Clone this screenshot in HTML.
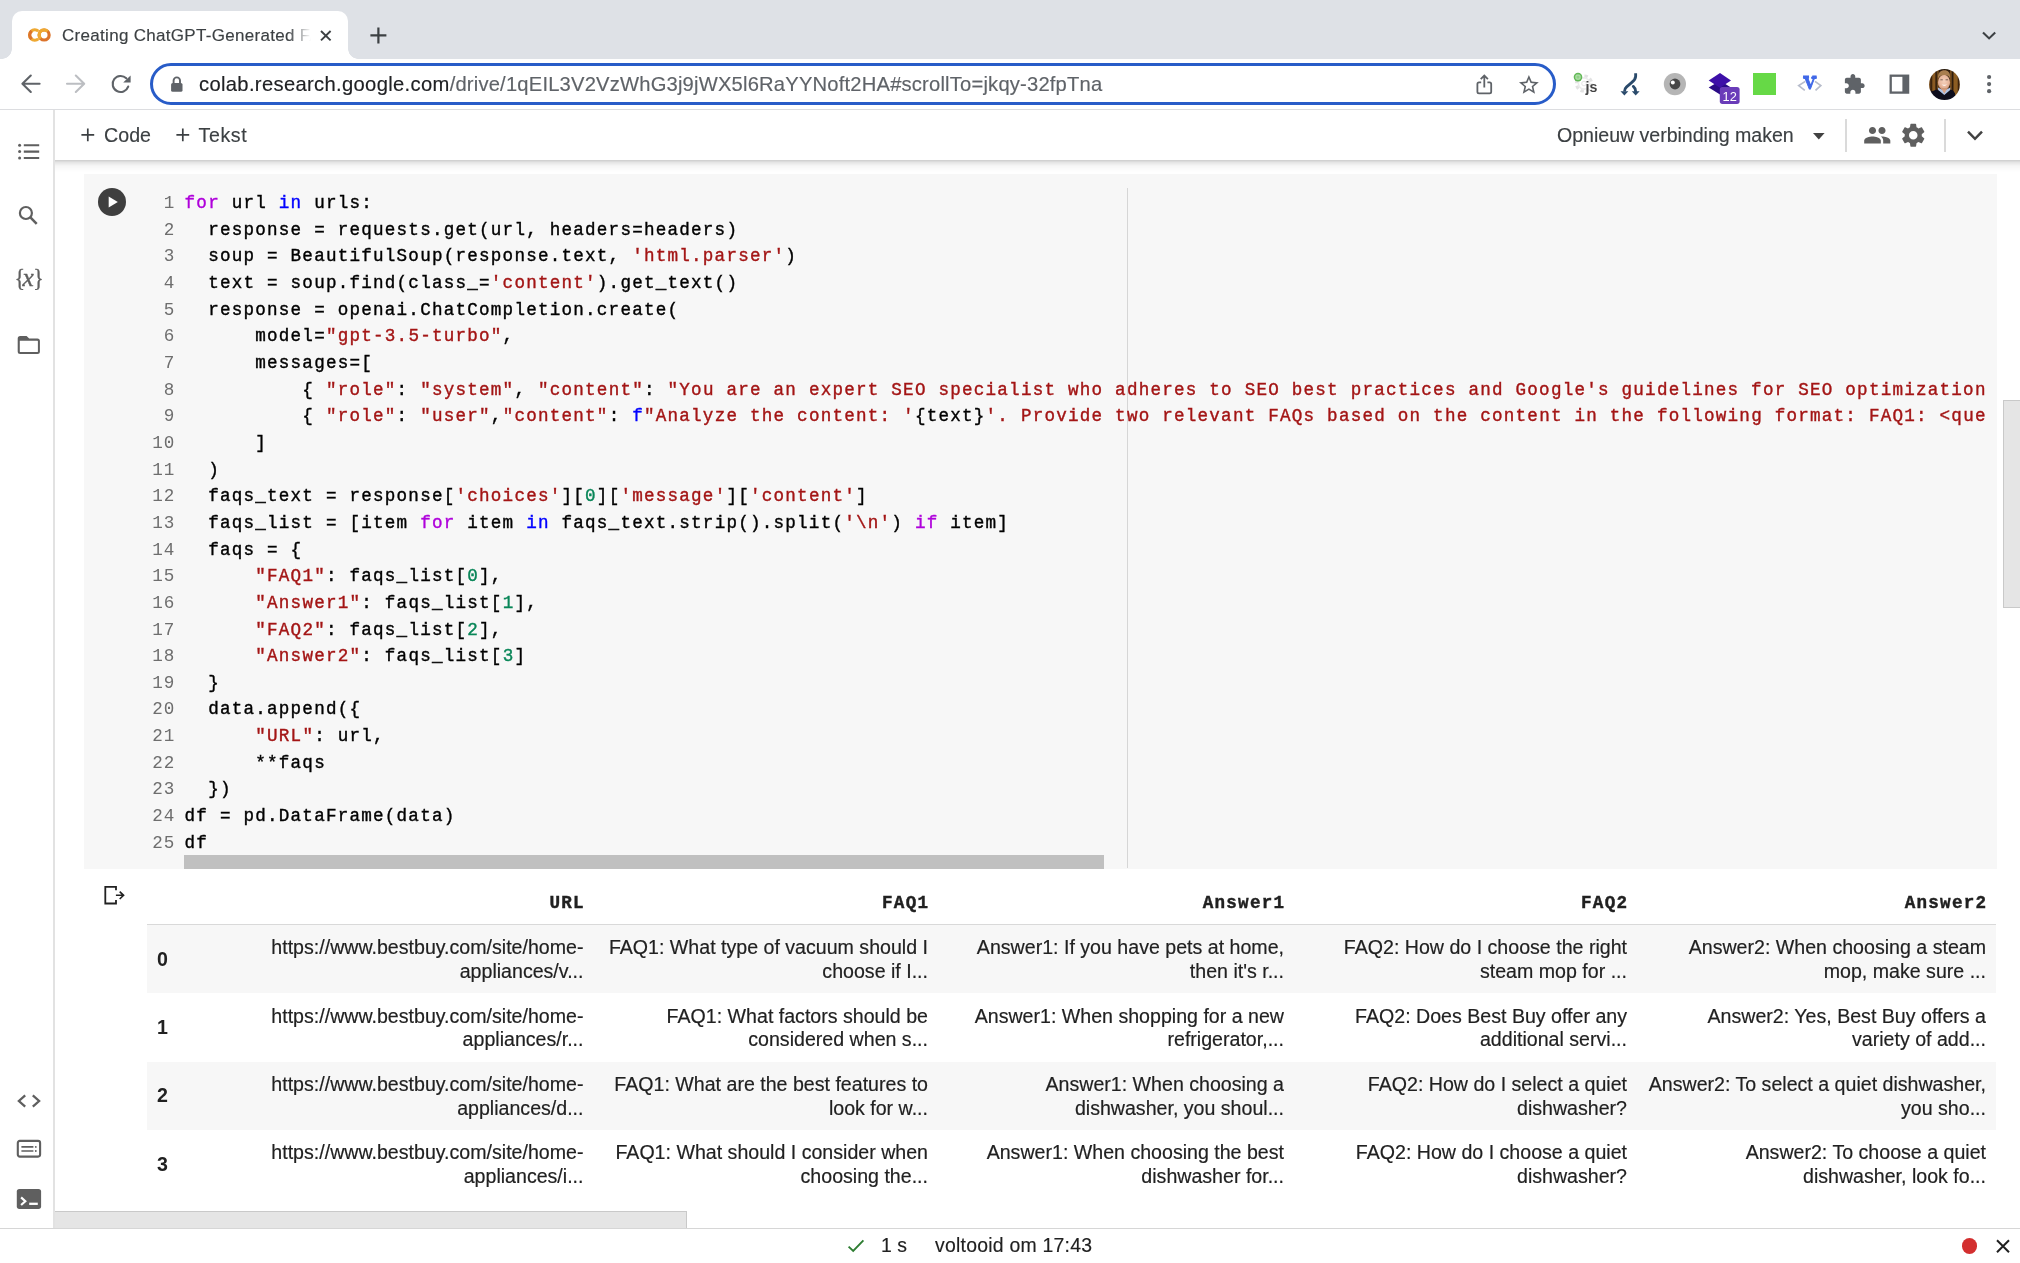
<!DOCTYPE html>
<html lang="nl">
<head>
<meta charset="utf-8">
<title>Creating ChatGPT-Generated FAQs</title>
<style>
*{box-sizing:border-box;margin:0;padding:0}
html,body{width:2020px;height:1263px;overflow:hidden;background:#fff}
body{position:relative;font-family:"Liberation Sans",sans-serif;color:#202124;-webkit-font-smoothing:antialiased;opacity:.999;will-change:transform}
.abs{position:absolute}
svg{position:absolute;overflow:visible}
/* ---------- browser chrome ---------- */
#tabstrip{left:0;top:0;width:2020px;height:58.7px;background:#dee1e6}
#tab{left:11.5px;top:11px;width:336.3px;height:47.7px;background:#fff;border-radius:10px 10px 0 0}
#tab:before,#tab:after{content:"";position:absolute;bottom:0;width:10px;height:10px;background:radial-gradient(circle at 0 0,#dee1e6 9.5px,#fff 10px)}
#tab:before{left:-10px}
#tab:after{right:-10px;background:radial-gradient(circle at 100% 0,#dee1e6 9.5px,#fff 10px)}
#tabtitle{-webkit-text-stroke:.15px;left:62px;top:24px;width:252px;height:24px;font-size:17px;line-height:24px;color:#3c4043;white-space:nowrap;overflow:hidden;letter-spacing:.3px;
 -webkit-mask-image:linear-gradient(90deg,#000 226px,transparent 249px);mask-image:linear-gradient(90deg,#000 226px,transparent 249px)}
#toolbar{left:0;top:58.7px;width:2020px;height:51.3px;background:#fff;border-bottom:1.5px solid #dcdde0}
#omni{left:150px;top:63px;width:1406px;height:42px;border:3px solid #285cc8;border-radius:21px;background:#fff}
#url{-webkit-text-stroke:.15px;left:199px;top:71px;font-size:20.2px;line-height:26px;white-space:nowrap;color:#5f6368;letter-spacing:.185px}
#url b{letter-spacing:.33px}
#url b{font-weight:400;color:#202124}
/* ---------- colab ---------- */
#side{left:0;top:110px;width:55px;height:1119px;background:#fff;border-right:2px solid #e2e2e2}
#ctool{left:55px;top:110px;width:1965px;height:50px;background:#fff;z-index:3}
#cshadow{left:55px;top:160px;width:1965px;height:13px;z-index:3;background:linear-gradient(180deg,rgba(0,0,0,.2) 0,rgba(0,0,0,.1) 2.5px,rgba(0,0,0,.035) 6px,rgba(0,0,0,0) 12px)}
.tb{-webkit-text-stroke:.15px;font-size:19.6px;line-height:24px;color:#3c4043;white-space:nowrap;z-index:4}
.vdiv{width:1.5px;background:#dadada;z-index:4}
/* ---------- code cell ---------- */
#cell{left:84px;top:174px;width:1913px;height:694.5px;background:#f7f7f7}
#ruler{left:1126.5px;top:188px;width:1.5px;height:680px;background:#d6d6d6}
#cellsb{left:184px;top:855px;width:920px;height:13.5px;background:#c0c0c0}
#code{left:184.6px;top:190px;width:1803px;overflow:hidden;font-family:"Liberation Mono",monospace;font-size:17.6px;letter-spacing:1.22px;line-height:26.66px;color:#000;-webkit-text-stroke:.38px}
#code div{height:26.66px;white-space:pre}
#code i{font-style:normal}
#code .k{color:#af00db}
#code .b{color:#0000ff}
#code .s{color:#a31515}
#code .n{color:#098658}
#lnums{left:120px;top:190px;width:55.2px;text-align:right;font-family:"Liberation Mono",monospace;font-size:17.6px;letter-spacing:.9px;line-height:26.66px;color:#6e6e6e;white-space:pre}
/* ---------- output ---------- */
#thline{left:147px;top:924px;width:1849px;height:1.5px;background:#d9d9d9}
.trbg{left:147px;width:1849px;background:#f7f7f7}
.th{-webkit-text-stroke:.4px;top:889.5px;font-family:"Liberation Mono",monospace;font-weight:700;font-size:17.6px;letter-spacing:1.22px;line-height:26px;color:#212121;white-space:nowrap;margin-right:-1.22px}
.td{-webkit-text-stroke:.18px;font-size:19.6px;line-height:23.85px;color:#212121;text-align:right;white-space:nowrap}
.ti{left:157px;font-size:19.6px;line-height:24px;font-weight:700;color:#212121}
/* ---------- scrollbars / status ---------- */
#vsb{left:2003px;top:400px;width:18px;height:208px;background:#e5e5e5;border:1.5px solid #c9c9c9;border-right:0}
#hsb{left:55px;top:1211px;width:632px;height:17.5px;background:#e5e5e5;border:1.5px solid #c9c9c9;border-left:0}
#status{left:0;top:1228px;width:2020px;height:35px;background:#fff;border-top:1.5px solid #d6d6d6}
.st{-webkit-text-stroke:.15px;top:1233.3px;font-size:19.4px;line-height:24px;color:#212121;white-space:nowrap}
</style>
</head>
<body>
<!-- tab strip -->
<div id="tabstrip" class="abs"></div>
<div id="tab" class="abs"></div>
<div id="tabtitle" class="abs">Creating ChatGPT-Generated FAQs</div>
<!-- toolbar -->
<div id="toolbar" class="abs"></div>
<div id="omni" class="abs"></div>
<div id="url" class="abs"><b>colab.research.google.com</b>/drive/1qEIL3V2VzWhG3j9jWX5l6RaYYNoft2HA#scrollTo=jkqy-32fpTna</div>
<!-- colab -->
<div id="side" class="abs"></div>
<div id="ctool" class="abs"></div>
<div id="cshadow" class="abs"></div>
<div class="abs tb" style="left:104px;top:123.3px;letter-spacing:.05px">Code</div>
<div class="abs tb" style="left:198.5px;top:123.3px;letter-spacing:.6px">Tekst</div>
<div class="abs tb" style="left:1557px;top:123.3px;letter-spacing:-.03px">Opnieuw verbinding maken</div>
<div class="abs vdiv" style="left:1845px;top:119px;height:33px"></div>
<div class="abs vdiv" style="left:1944px;top:119px;height:33px"></div>
<!-- code cell -->
<div id="cell" class="abs"></div>
<div id="ruler" class="abs"></div>
<div id="cellsb" class="abs"></div>
<div id="lnums" class="abs">1<br>2<br>3<br>4<br>5<br>6<br>7<br>8<br>9<br>10<br>11<br>12<br>13<br>14<br>15<br>16<br>17<br>18<br>19<br>20<br>21<br>22<br>23<br>24<br>25</div>
<div id="code" class="abs">
<div><i class="k">for</i> url <i class="b">in</i> urls:</div>
<div>  response = requests.get(url, headers=headers)</div>
<div>  soup = BeautifulSoup(response.text, <i class="s">'html.parser'</i>)</div>
<div>  text = soup.find(class_=<i class="s">'content'</i>).get_text()</div>
<div>  response = openai.ChatCompletion.create(</div>
<div>      model=<i class="s">"gpt-3.5-turbo"</i>,</div>
<div>      messages=[</div>
<div>          { <i class="s">"role"</i>: <i class="s">"system"</i>, <i class="s">"content"</i>: <i class="s">"You are an expert SEO specialist who adheres to SEO best practices and Google's guidelines for SEO optimization</i></div>
<div>          { <i class="s">"role"</i>: <i class="s">"user"</i>,<i class="s">"content"</i>: <i class="b">f</i><i class="s">"Analyze the content: '</i>{text}<i class="s">'. Provide two relevant FAQs based on the content in the following format: FAQ1: &lt;que</i></div>
<div>      ]</div>
<div>  )</div>
<div>  faqs_text = response[<i class="s">'choices'</i>][<i class="n">0</i>][<i class="s">'message'</i>][<i class="s">'content'</i>]</div>
<div>  faqs_list = [item <i class="k">for</i> item <i class="b">in</i> faqs_text.strip().split(<i class="s">'\n'</i>) <i class="k">if</i> item]</div>
<div>  faqs = {</div>
<div>      <i class="s">"FAQ1"</i>: faqs_list[<i class="n">0</i>],</div>
<div>      <i class="s">"Answer1"</i>: faqs_list[<i class="n">1</i>],</div>
<div>      <i class="s">"FAQ2"</i>: faqs_list[<i class="n">2</i>],</div>
<div>      <i class="s">"Answer2"</i>: faqs_list[<i class="n">3</i>]</div>
<div>  }</div>
<div>  data.append({</div>
<div>      <i class="s">"URL"</i>: url,</div>
<div>      **faqs</div>
<div>  })</div>
<div>df = pd.DataFrame(data)</div>
<div>df</div>
</div>
<!--CELLEND-->
<!-- output table -->
<div id="thline" class="abs"></div>
<div class="abs trbg" style="top:925px;height:68.25px"></div>
<div class="abs trbg" style="top:1061.5px;height:68.25px"></div>
<div class="abs th" style="right:1436.5px">URL</div>
<div class="abs th" style="right:1092px">FAQ1</div>
<div class="abs th" style="right:736px">Answer1</div>
<div class="abs th" style="right:393px">FAQ2</div>
<div class="abs th" style="right:34px">Answer2</div>
<div class="abs ti" style="top:946.9px">0</div>
<div class="abs td" style="right:1436.5px;top:936.4px">https://www.bestbuy.com/site/home-<br>appliances/v...</div>
<div class="abs td" style="right:1092px;top:936.4px">FAQ1: What type of vacuum should I<br>choose if I...</div>
<div class="abs td" style="right:736px;top:936.4px">Answer1: If you have pets at home,<br>then it's r...</div>
<div class="abs td" style="right:393px;top:936.4px">FAQ2: How do I choose the right<br>steam mop for ...</div>
<div class="abs td" style="right:34px;top:936.4px">Answer2: When choosing a steam<br>mop, make sure ...</div>
<div class="abs ti" style="top:1015.1px">1</div>
<div class="abs td" style="right:1436.5px;top:1004.6px">https://www.bestbuy.com/site/home-<br>appliances/r...</div>
<div class="abs td" style="right:1092px;top:1004.6px">FAQ1: What factors should be<br>considered when s...</div>
<div class="abs td" style="right:736px;top:1004.6px">Answer1: When shopping for a new<br>refrigerator,...</div>
<div class="abs td" style="right:393px;top:1004.6px">FAQ2: Does Best Buy offer any<br>additional servi...</div>
<div class="abs td" style="right:34px;top:1004.6px">Answer2: Yes, Best Buy offers a<br>variety of add...</div>
<div class="abs ti" style="top:1083.4px">2</div>
<div class="abs td" style="right:1436.5px;top:1072.9px">https://www.bestbuy.com/site/home-<br>appliances/d...</div>
<div class="abs td" style="right:1092px;top:1072.9px">FAQ1: What are the best features to<br>look for w...</div>
<div class="abs td" style="right:736px;top:1072.9px">Answer1: When choosing a<br>dishwasher, you shoul...</div>
<div class="abs td" style="right:393px;top:1072.9px">FAQ2: How do I select a quiet<br>dishwasher?</div>
<div class="abs td" style="right:34px;top:1072.9px">Answer2: To select a quiet dishwasher,<br>you sho...</div>
<div class="abs ti" style="top:1151.7px">3</div>
<div class="abs td" style="right:1436.5px;top:1141.2px">https://www.bestbuy.com/site/home-<br>appliances/i...</div>
<div class="abs td" style="right:1092px;top:1141.2px">FAQ1: What should I consider when<br>choosing the...</div>
<div class="abs td" style="right:736px;top:1141.2px">Answer1: When choosing the best<br>dishwasher for...</div>
<div class="abs td" style="right:393px;top:1141.2px">FAQ2: How do I choose a quiet<br>dishwasher?</div>
<div class="abs td" style="right:34px;top:1141.2px">Answer2: To choose a quiet<br>dishwasher, look fo...</div>
<!--OUTPUTEND-->
<!-- scrollbars + status bar -->
<div id="vsb" class="abs"></div>
<div id="hsb" class="abs"></div>
<div id="status" class="abs"></div>
<svg style="left:847px;top:1239px" width="18" height="14" viewBox="0 0 18 14"><path d="M1.6 7.6 L6.2 12 L16.4 1.4" fill="none" stroke="#2e7d32" stroke-width="1.9"/></svg>
<div class="abs st" style="left:881px">1 s</div>
<div class="abs st" style="left:935px;letter-spacing:.25px">voltooid om 17:43</div>
<div class="abs" style="left:1961.8px;top:1238.4px;width:15.4px;height:15.4px;border-radius:50%;background:#d32f2f"></div>
<svg style="left:1996px;top:1239px" width="14" height="14" viewBox="0 0 14 14"><path d="M1 1.2 L13 13.2 M13 1.2 L1 13.2" fill="none" stroke="#212121" stroke-width="2"/></svg>
<!--STATUSEND-->
<!-- ===== tab strip icons ===== -->
<svg style="left:26px;top:27px" width="26" height="16" viewBox="0 0 26 16" fill="none" stroke-width="3.200">
 <path d="M12.330 4.140 A5.200 5.200 0 1 0 12.330 11.860" stroke="#eea832"/>
 <path d="M5.650 3.900 A5.200 5.200 0 0 0 5.650 12.100" stroke="#dc742c"/>
 <circle cx="18.150" cy="8" r="5" stroke="#dc742c"/>
 <path d="M21.560 4.340 A5 5 0 0 0 14.610 11.540" stroke="#eea832"/>
</svg>
<svg style="left:320px;top:30px" width="12" height="12" viewBox="0 0 12 12"><path d="M1 1 L10.6 10.4 M10.6 1 L1 10.4" fill="none" stroke="#3c4043" stroke-width="1.9"/></svg>
<svg style="left:370px;top:27px" width="17" height="17" viewBox="0 0 17 17"><path d="M8.4 0.4 V16.4 M0.4 8.4 H16.4" fill="none" stroke="#3c4043" stroke-width="2.2"/></svg>
<svg style="left:1981px;top:30px" width="16" height="11" viewBox="0 0 16 11"><path d="M2 2.4 L8.1 8.4 L14.2 2.4" fill="none" stroke="#3c4043" stroke-width="2.1"/></svg>
<!-- ===== toolbar nav icons ===== -->
<svg style="left:20px;top:73px" width="22" height="22" viewBox="0 0 22 22"><path d="M19.6 10.8 H2.6 M10.8 2.6 L2.4 10.8 L10.8 19" fill="none" stroke="#5f6368" stroke-width="2.1" stroke-linecap="round" stroke-linejoin="round"/></svg>
<svg style="left:65px;top:73px" width="22" height="22" viewBox="0 0 22 22"><path d="M2 10.8 H19 M10.8 2.6 L19.2 10.8 L10.8 19" fill="none" stroke="#bcbec2" stroke-width="2.1" stroke-linecap="round" stroke-linejoin="round"/></svg>
<svg style="left:110px;top:73px" width="22" height="22" viewBox="0 0 22 22">
 <path d="M16.3 5.3 A8 8 0 1 0 18.2 13.6" fill="none" stroke="#5f6368" stroke-width="2.1" stroke-linecap="round"/>
 <path d="M20.6 2.4 V9.6 H13.2 Z" fill="#5f6368"/>
</svg>
<!-- lock -->
<svg style="left:170px;top:76px" width="14" height="17" viewBox="0 0 14 17">
 <path d="M3.6 7.4 V4.6 A3.2 3.2 0 0 1 10 4.6 V7.4" fill="none" stroke="#5f6368" stroke-width="1.9"/>
 <rect x="1.1" y="6.9" width="11.4" height="8.9" rx="1.6" fill="#5f6368"/>
</svg>
<!-- share -->
<svg style="left:1475px;top:73px" width="19" height="23" viewBox="0 0 19 23">
 <path d="M6.2 9.3 H4 A1.6 1.6 0 0 0 2.4 10.9 V18.8 A1.6 1.6 0 0 0 4 20.4 H14.6 A1.6 1.6 0 0 0 16.200 18.800 V10.900 A1.600 1.600 0 0 0 14.600 9.300 H12.400" fill="none" stroke="#5f6368" stroke-width="1.8"/>
 <path d="M9.3 14.600 V2.800 M5.700 6.200 L9.300 2.600 L12.900 6.200" fill="none" stroke="#5f6368" stroke-width="1.8"/>
</svg>
<!-- star -->
<svg style="left:1517.400px;top:72.500px" width="23.800" height="23.800" viewBox="0 0 24 24"><path fill="#5f6368" d="M22 9.240l-7.190-.62L12 2 9.190 8.630 2 9.240l5.460 4.730L5.820 21 12 17.270 18.180 21l-1.630-7.030L22 9.240zM12 15.400l-3.760 2.270 1-4.280-3.320-2.880 4.380-.38L12 6.100l1.710 4.040 4.380.38-3.320 2.880 1 4.280L12 15.400z"/></svg>
<!-- ===== extensions ===== -->
<!-- js -->
<svg style="left:1572px;top:71px" width="28" height="28" viewBox="0 0 28 28">
 <circle cx="12" cy="12.500" r="7.600" fill="none" stroke="#e3e3e3" stroke-width="3" stroke-dasharray="3.400 2.600"/>
 <circle cx="12" cy="12.500" r="5.600" fill="none" stroke="#ececec" stroke-width="1.600"/>
 <circle cx="12" cy="12.500" r="2.300" fill="none" stroke="#e6e6e6" stroke-width="1"/>
 <circle cx="6" cy="6.100" r="4.300" fill="#62b856"/>
 <rect x="3.900" y="4" width="4.200" height="4.200" rx=".9" fill="#8fd086" stroke="#c4e8bf" stroke-width=".9"/>
 <text x="13.500" y="20.900" font-family="Liberation Sans, sans-serif" font-weight="700" font-size="14.200" fill="#444">js</text>
</svg>
<!-- merge arrows -->
<svg style="left:1618px;top:71px" width="24" height="26" viewBox="0 0 24 26">
 <path d="M17.650 2.200 V5.200 C17.650 8.600 15.600 9.900 13 12.100 L8.600 15.800 C7 17.200 6.500 18.200 6.500 20.600" fill="none" stroke="#2a4a6b" stroke-width="2.850"/>
 <path d="M15.300 15.400 C16.800 16.600 17.650 17.800 17.650 20.600" fill="none" stroke="#2a4a6b" stroke-width="2.850" stroke-linecap="round"/>
 <path d="M2.500 20.200 H10.300 L6.400 24.400 Z" fill="#2a4a6b"/>
 <path d="M13.800 20.200 H21.600 L17.700 24.400 Z" fill="#2a4a6b"/>
</svg>
<!-- eye -->
<svg style="left:1663px;top:72px" width="24" height="24" viewBox="0 0 24 24">
 <circle cx="11.900" cy="12.100" r="11.100" fill="#b5b5b5"/>
 <circle cx="12" cy="12" r="5.400" fill="#474747"/>
 <circle cx="9.800" cy="10.500" r="2" fill="#fff"/>
</svg>
<!-- purple layers + badge -->
<svg style="left:1706px;top:70px" width="36" height="36" viewBox="0 0 36 36">
 <path d="M2.700 17.600 L14 10.800 L25 17.600 L14 24.600 Z" fill="#2a0b86"/>
 <path d="M2.700 10.400 L14 3 L25 10.400 L14 17.800 Z" fill="#3d0fa8"/>
 <rect x="13.800" y="16.900" width="19.800" height="17" rx="2.600" fill="#6a3cb9"/>
 <text x="23.700" y="30.900" text-anchor="middle" font-family="Liberation Sans, sans-serif" font-size="12.800" fill="#fff">12</text>
</svg>
<!-- green square -->
<div class="abs" style="left:1753.400px;top:73px;width:22.600px;height:22.200px;background:#66d946"></div>
<!-- <V> -->
<svg style="left:1797px;top:72px" width="26" height="24" viewBox="0 0 26 24">
 <path d="M8.300 9.400 L1.700 13.600 L7.800 18.400 M18 9.400 L23.800 13.600 L18.500 18.400" fill="none" stroke="#b7bccb" stroke-width="1.700"/>
 <text x="12.900" y="17.300" text-anchor="middle" font-family="Liberation Serif, serif" font-weight="700" font-size="18.200" fill="#4169e8" stroke="#4169e8" stroke-width=".8">V</text>
 <rect x="5.900" y="4.500" width="6.200" height="2.500" rx="1.200" fill="#4169e8"/><rect x="14" y="4.500" width="6" height="2.500" rx="1.200" fill="#4169e8"/>
</svg>
<!-- puzzle -->
<svg style="left:1843.100px;top:73.400px" width="22.600" height="22.600" viewBox="0 0 24 24"><path fill="#5f6368" d="M20.500 11H19V7c0-1.100-.9-2-2-2h-4V3.500C13 2.120 11.880 1 10.500 1S8 2.120 8 3.500V5H4c-1.100 0-1.990.9-1.990 2v3.800H3.500c1.490 0 2.700 1.210 2.700 2.700s-1.210 2.700-2.700 2.700H2V20c0 1.100.9 2 2 2h3.800v-1.500c0-1.490 1.210-2.700 2.700-2.700 1.490 0 2.700 1.210 2.700 2.700V22H17c1.100 0 2-.9 2-2v-4h1.500c1.380 0 2.500-1.120 2.500-2.500S21.880 11 20.500 11z"/></svg>
<!-- side panel -->
<svg style="left:1889px;top:74px" width="21" height="20" viewBox="0 0 21 20">
 <rect x="1.700" y="1.700" width="17.400" height="16.900" fill="none" stroke="#5f6368" stroke-width="2.300"/>
 <rect x="13.400" y="1.700" width="5.700" height="16.900" fill="#5f6368"/>
</svg>
<!-- avatar -->
<svg style="left:1929px;top:68.800px" width="31" height="31" viewBox="0 0 31 31">
 <defs><clipPath id="avc"><circle cx="15.500" cy="15.500" r="15.450"/></clipPath>
 <filter id="avb" x="-10%" y="-10%" width="120%" height="120%"><feGaussianBlur stdDeviation=".55"/></filter>
 <linearGradient id="wood" x1="0" x2="1" y1="0" y2="0"><stop offset="0" stop-color="#3a2410"/><stop offset=".07" stop-color="#7a4f1f"/><stop offset=".12" stop-color="#2a190b"/><stop offset=".17" stop-color="#8a5a22"/><stop offset=".22" stop-color="#8a5a22"/><stop offset=".26" stop-color="#24160a"/><stop offset=".31" stop-color="#7d5220"/><stop offset=".36" stop-color="#2b1a0c"/><stop offset=".64" stop-color="#2b1a0c"/><stop offset=".68" stop-color="#8a5c24"/><stop offset=".73" stop-color="#2a190b"/><stop offset=".78" stop-color="#8c5d24"/><stop offset=".86" stop-color="#8c5d24"/><stop offset=".9" stop-color="#3a2410"/><stop offset=".95" stop-color="#7f5321"/><stop offset="1" stop-color="#3a2410"/></linearGradient>
 <radialGradient id="skin" cx=".5" cy=".42" r=".6"><stop offset="0" stop-color="#f4d0bc"/><stop offset=".6" stop-color="#e9b99f"/><stop offset="1" stop-color="#cf9676"/></radialGradient></defs>
 <g clip-path="url(#avc)"><g filter="url(#avb)">
  <rect x="-2" y="-2" width="35" height="35" fill="url(#wood)"/>
  <path d="M-2 33 V26 C1 22.500 5 21.200 8.600 20.400 L15.200 25.500 L21.400 20.400 C23.500 21 25 22 26 24.500 L27 33 Z" fill="#08081c"/>
  <path d="M8.800 18.400 L9.200 21 L15.300 26 L21.200 21 L21.300 18.400 L15.300 21.600 Z" fill="#aec3e6"/>
  <path d="M12 19 L15.300 24.800 L18.600 19 Z" fill="#d9a488"/>
  <ellipse cx="15" cy="13.400" rx="6.100" ry="7.600" fill="url(#skin)"/>
  <path d="M9 9.400 C8.400 3.600 12 1.200 15.400 1.200 C19 1.200 21.800 3.600 21 9.400 C19.800 6.800 17.600 5.900 15.300 6 C12.800 6.100 10.400 7 9 9.400 Z" fill="#a87e50"/>
  <path d="M12.600 15.200 Q15.300 18.400 18 15.200 Q15.300 16.200 12.600 15.200 Z" fill="#fff"/>
  <path d="M11.400 10.800 H13.800 M16.600 10.800 H19" stroke="#6d5a50" stroke-width=".9"/>
  <path d="M10.800 18.200 Q15.200 22.600 19.600 18.200 Q15.200 20.400 10.800 18.200 Z" fill="#c99474"/>
 </g></g>
</svg>
<!-- menu dots -->
<svg style="left:1986px;top:74px" width="6" height="20" viewBox="0 0 6 20"><circle cx="3.100" cy="3" r="2.100" fill="#5f6368"/><circle cx="3.100" cy="10.100" r="2.100" fill="#5f6368"/><circle cx="3.100" cy="17.200" r="2.100" fill="#5f6368"/></svg>
<!-- ===== colab toolbar icons ===== -->
<svg style="left:81px;top:128px;z-index:4" width="14" height="14" viewBox="0 0 14 14"><path d="M6.800 0.400 V13.200 M0.400 6.800 H13.200" fill="none" stroke="#3c4043" stroke-width="1.700"/></svg>
<svg style="left:175.500px;top:128px;z-index:4" width="14" height="14" viewBox="0 0 14 14"><path d="M6.800 0.400 V13.200 M0.400 6.800 H13.200" fill="none" stroke="#3c4043" stroke-width="1.700"/></svg>
<svg style="left:1812.600px;top:133px;z-index:4" width="12" height="7" viewBox="0 0 12 7"><path d="M0 0 H11.600 L5.800 6.600 Z" fill="#424242"/></svg>
<svg style="left:1862.500px;top:121px;z-index:4" width="28.500" height="28.500" viewBox="0 0 24 24"><path fill="#5f5f5f" d="M16 11c1.660 0 2.990-1.340 2.990-3S17.660 5 16 5c-1.660 0-3 1.340-3 3s1.340 3 3 3zm-8 0c1.660 0 2.990-1.340 2.990-3S9.660 5 8 5C6.340 5 5 6.340 5 8s1.340 3 3 3zm0 2c-2.330 0-7 1.170-7 3.500V19h14v-2.500c0-2.330-4.670-3.500-7-3.500zm8 0c-.29 0-.62.020-.97.050 1.160.84 1.970 1.970 1.970 3.450V19h6v-2.500c0-2.330-4.670-3.500-7-3.500z"/></svg>
<svg style="left:1898.600px;top:121.100px;z-index:4" width="28.500" height="28.500" viewBox="0 0 24 24"><path fill="#5f5f5f" d="M19.140 12.940c.04-.3.060-.61.060-.94 0-.32-.02-.64-.07-.94l2.030-1.580c.18-.14.230-.41.120-.61l-1.920-3.320c-.12-.22-.37-.29-.59-.22l-2.390.96c-.5-.38-1.030-.7-1.620-.94l-.36-2.540c-.04-.24-.24-.41-.48-.41h-3.840c-.24 0-.43.170-.47.410l-.36 2.540c-.59.240-1.130.57-1.620.94l-2.390-.96c-.22-.08-.47 0-.59.220L2.740 8.870c-.12.210-.08.470.12.610l2.030 1.580c-.05.300-.09.630-.09.940s.02.640.07.940l-2.030 1.580c-.18.140-.23.410-.12.610l1.920 3.320c.12.220.37.290.59.220l2.390-.96c.5.380 1.030.7 1.620.94l.36 2.540c.05.240.24.410.48.410h3.840c.24 0 .44-.17.470-.41l.36-2.540c.59-.24 1.130-.56 1.620-.94l2.390.96c.22.080.47 0 .59-.22l1.920-3.320c.12-.22.070-.47-.12-.61l-2.010-1.580zM12 15.600c-1.980 0-3.600-1.620-3.600-3.600s1.620-3.600 3.600-3.600 3.600 1.620 3.600 3.600-1.620 3.600-3.600 3.600z"/></svg>
<svg style="left:1965px;top:129px;z-index:4" width="20" height="14" viewBox="0 0 20 14"><path d="M3 2.600 L10 9.800 L17 2.600" fill="none" stroke="#424242" stroke-width="2.500"/></svg>
<!-- ===== sidebar icons ===== -->
<svg style="left:17px;top:142px" width="24" height="20" viewBox="0 0 24 20">
 <path d="M6.800 3.300 H22.200 M6.800 9.600 H22.200 M6.800 16 H22.200" fill="none" stroke="#5f5f5f" stroke-width="2.100"/>
 <circle cx="2.600" cy="3.300" r="1.500" fill="#5f5f5f"/><circle cx="2.600" cy="9.600" r="1.500" fill="#5f5f5f"/><circle cx="2.600" cy="16" r="1.500" fill="#5f5f5f"/>
</svg>
<svg style="left:17px;top:204px" width="24" height="24" viewBox="0 0 24 24">
 <circle cx="8.900" cy="9" r="6" fill="none" stroke="#5f5f5f" stroke-width="2.200"/>
 <path d="M13.400 13.400 L19.700 19.900" fill="none" stroke="#5f5f5f" stroke-width="2.500"/>
</svg>
<svg style="left:14px;top:264px" width="30" height="32" viewBox="0 0 30 32" font-family="Liberation Serif, serif" fill="#5f5f5f">
 <text x="0.400" y="0" transform="translate(0,21.950) scale(1,1.144)" font-size="22" stroke="#5f5f5f" stroke-width=".3">{</text>
 <text x="8.600" y="22" font-size="25.500" font-style="italic" stroke="#5f5f5f" stroke-width=".35">x</text>
 <text x="19.200" y="0" transform="translate(0,21.950) scale(1,1.144)" font-size="22" stroke="#5f5f5f" stroke-width=".3">}</text>
</svg>
<svg style="left:16px;top:335px" width="26" height="21" viewBox="0 0 26 21">
 <path fill-rule="evenodd" fill="#5f5f5f" d="M4.200 1 H10.600 L13.200 3.600 H21.400 A2.500 2.500 0 0 1 23.900 6.100 V16.500 A2.500 2.500 0 0 1 21.400 19 H4.200 A2.500 2.500 0 0 1 1.700 16.500 V3.500 A2.500 2.500 0 0 1 4.200 1 Z M3.800 5.800 V16.400 A.5 .5 0 0 0 4.300 16.900 H21.400 A.5 .5 0 0 0 21.900 16.400 V6.300 A.5 .5 0 0 0 21.400 5.800 Z"/>
</svg>
<svg style="left:16px;top:1093px" width="26" height="16" viewBox="0 0 26 16"><path d="M9.200 2.400 L2.900 8 L9.200 13.600 M16.800 2.400 L23.100 8 L16.800 13.600" fill="none" stroke="#5f5f5f" stroke-width="2.300"/></svg>
<svg style="left:16px;top:1139px" width="26" height="20" viewBox="0 0 26 20">
 <rect x="1.800" y="1.900" width="22.300" height="15.700" rx="2" fill="none" stroke="#5f5f5f" stroke-width="2.100"/>
 <path d="M5.400 7.900 H17.400 M5.400 12 H17.400" fill="none" stroke="#5f5f5f" stroke-width="1.700"/>
 <circle cx="19.800" cy="7.900" r=".95" fill="#5f5f5f"/><circle cx="19.800" cy="12" r=".95" fill="#5f5f5f"/>
</svg>
<svg style="left:16px;top:1188px" width="26" height="22" viewBox="0 0 26 22">
 <rect x=".8" y="1" width="24.300" height="19.900" rx="2.600" fill="#5f5f5f"/>
 <path d="M5.100 9.400 L9.300 13.200 L5.100 17" fill="none" stroke="#fff" stroke-width="2.200"/>
 <path d="M13.200 15.800 H21.800" fill="none" stroke="#fff" stroke-width="2.300"/>
</svg>
<!-- ===== run button ===== -->
<svg style="left:98px;top:188px" width="28" height="28" viewBox="0 0 28 28"><circle cx="14" cy="14" r="14" fill="#3f3f3f"/><path d="M10.700 8.600 V19.400 L19.800 14 Z" fill="#fff"/></svg>
<!-- ===== output icon ===== -->
<svg style="left:104px;top:885px" width="21" height="20" viewBox="0 0 21 20">
 <path d="M12 5.200 V1.900 H1.300 V18.500 H12 V15" fill="none" stroke="#212121" stroke-width="1.800"/>
 <path d="M11.900 10.300 H19.400 M15.700 6.600 L19.600 10.300 L15.700 14" fill="none" stroke="#212121" stroke-width="1.600"/>
</svg>
<!--ICONSEND-->
</body>
</html>
